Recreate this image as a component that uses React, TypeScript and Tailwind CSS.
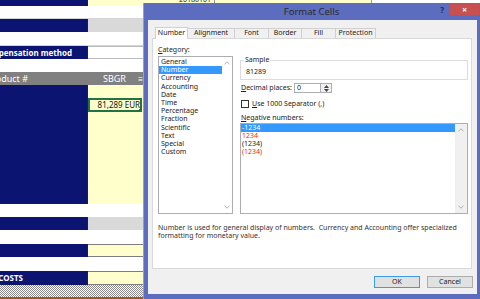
import React from 'react';

const tabs = [
  { label: 'Number', w: 'w-[33px]', active: true },
  { label: 'Alignment', w: 'w-[47px]', active: false },
  { label: 'Font', w: 'w-[34px]', active: false },
  { label: 'Border', w: 'w-[33px]', active: false },
  { label: 'Fill', w: 'w-[34px]', active: false },
  { label: 'Protection', w: 'w-[40px]', active: false },
];

const categories = [
  'General', 'Number', 'Currency', 'Accounting', 'Date', 'Time',
  'Percentage', 'Fraction', 'Scientific', 'Text', 'Special', 'Custom',
];

function Chevron({ down = false, color = '#a8a8a8' }: { down?: boolean; color?: string }) {
  return (
    <svg width="6" height="4" viewBox="0 0 6 4">
      <path d={down ? 'M0.5 0.8 L3 3.2 L5.5 0.8' : 'M0.5 3.2 L3 0.8 L5.5 3.2'} stroke={color} strokeWidth="0.9" fill="none" />
    </svg>
  );
}

function Sheet() {
  return (
    <div className="w-[144px] flex flex-col border-r border-[#a0a0a0]">
      {/* first row, top cut off */}
      <div className="h-[3px] flex">
        <div className="w-[88px] bg-[#0b1470] border-r border-[#222]" />
        <div className="flex-1 bg-[#ffffcc]" />
      </div>
      <div className="h-[13px] bg-white border-b border-[#d4d4d4]" />
      <div className="h-[13px] flex">
        <div className="w-[88px] bg-[#0b1470] border-r border-[#222]" />
        <div className="flex-1 bg-[#d9d9d9]" />
      </div>
      <div className="h-[14px] bg-white border-b border-[#d4d4d4]" />
      <div className="h-[13px] flex">
        <div className="w-[88px] bg-[#0b1470] border-r border-[#222] overflow-hidden flex justify-end items-center pr-[15px]">
          <span className="whitespace-nowrap text-white font-bold text-[8px] leading-[13px]">Compensation method</span>
        </div>
        <div className="flex-1 bg-white border-y border-[#bdbdbd]" />
      </div>
      <div className="h-[13px] bg-white" />
      {/* header */}
      <div className="h-[13px] flex bg-[#808080] text-white text-[9px] leading-[13px]">
        <div className="w-[88px] overflow-hidden flex justify-end pr-[60px]">
          <span className="whitespace-nowrap">Product #</span>
        </div>
        <div className="flex-1 flex pl-[15px] overflow-hidden">
          <span>SBGR</span>
          <span className="ml-auto text-[8px]">≡</span>
        </div>
      </div>
      <div className="h-[119px] flex">
        <div className="w-[88px] bg-[#0b1470] border-r border-[#222]" />
        <div className="flex-1 bg-[#ffffcc] pt-[13px]">
          <div className="relative w-[54px] h-[14px] border-2 border-[#217346] flex items-center justify-end text-[8px] text-[#111] whitespace-nowrap">
            81,289 EUR
            <div className="absolute -right-[2px] -bottom-[2px] w-[3px] h-[3px] bg-[#217346]" />
          </div>
        </div>
      </div>
      <div className="h-[13px] bg-white" />
      <div className="h-[13px] flex">
        <div className="w-[88px] bg-[#0b1470] border-r border-[#222]" />
        <div className="flex-1 bg-[#d9d9d9]" />
      </div>
      <div className="h-[14px] bg-white" />
      <div className="h-[13px] flex">
        <div className="w-[88px] bg-[#0b1470] border-r border-[#222]" />
        <div className="flex-1 bg-[#ffffcc] border-y border-[#7f7f7f]" />
      </div>
      <div className="h-[14px] bg-white" />
      <div className="h-[14px] flex">
        <div className="w-[88px] bg-[#0b1470] border-r border-[#222] overflow-hidden flex justify-end items-center pr-[64px]">
          <span className="whitespace-nowrap text-white font-bold text-[8px]">TOTAL COSTS</span>
        </div>
        <div className="flex-1 bg-[#ffffcc] border-y border-[#7f7f7f]" />
      </div>
      <div className="h-[12px] bg-[image:repeating-conic-gradient(#8a8a8a_0_25%,#ffffff_0_50%)] bg-[length:2px_2px]" />
      <div className="h-[2px] bg-[#9c5a1c]" />
    </div>
  );
}

function Dialog() {
  return (
    <div className="w-[336px] flex flex-col bg-[#5c6cbf] pb-[5px]">
      {/* title bar */}
      <div className="h-[17px] flex shrink-0">
        <div className="flex-1" />
        <div className="text-[9.5px] text-[#2b2b2b] leading-[17px]">Format Cells</div>
        <div className="flex-1 flex justify-end items-start pt-[1px] pr-[1px]">
          <span className="text-[8px] font-bold text-[#1e2a5a] leading-[11px] mr-[6px]">?</span>
          <div className="w-[29px] h-[11px] bg-[#c75050] text-white flex items-center justify-center text-[9px] font-bold leading-none">×</div>
        </div>
      </div>

      <div className="flex-1 ml-[4px] mr-[3px] bg-[#f0f0f0] flex flex-col pl-[4px] pt-[7px] text-[7px] text-[#222]">
        {/* tabs */}
        <div className="h-[11px] flex items-end pl-[3px]">
          {tabs.map((t) =>
            t.active ? (
              <div key={t.label} className={`${t.w} h-[12px] -mb-px relative z-10 bg-white border border-b-0 border-[#d0d0d0] flex items-center justify-center`}>
                {t.label}
              </div>
            ) : (
              <div key={t.label} className={`${t.w} h-[10px] bg-[#f0f0f0] border border-b-0 border-l-0 border-[#d0d0d0] flex items-center justify-center`}>
                {t.label}
              </div>
            )
          )}
        </div>

        {/* panel */}
        <div className="w-[320px] h-[231px] border border-[#d9d9d9] bg-white flex flex-col pl-[5px] pt-[6px]">
          <div className="flex">
            {/* category */}
            <div className="w-[75px] flex flex-col">
              <div className="h-[9px] leading-[9px]"><span className="underline">C</span>ategory:</div>
              <div className="mt-[2px] h-[158px] border border-[#abadb3] flex">
                <div className="flex-1 flex flex-col pt-px">
                  {categories.map((c) => (
                    <div key={c} className={c === 'Number' ? 'leading-[8.2px] pl-[2px] bg-[#3399ff] text-white' : 'leading-[8.2px] pl-[2px]'}>
                      {c}
                    </div>
                  ))}
                </div>
                <div className="w-[10px] flex flex-col justify-between items-center py-[4px]">
                  <Chevron />
                  <Chevron down />
                </div>
              </div>
            </div>

            {/* right side */}
            <div className="ml-[7px] w-[228px] flex flex-col">
              <fieldset className="mt-[11px] h-[24px] border border-[#dcdcdc]">
                <legend className="ml-[3px] px-[1px] leading-[8px]">Sample</legend>
                <div className="pt-[4px] pl-[5px] leading-[8px]">81289</div>
              </fieldset>

              <div className="mt-[3px] h-[10px] flex items-center">
                <div className="w-[54px] pl-px"><span className="underline">D</span>ecimal places:</div>
                <div className="w-[27px] h-[10px] border border-[#abadb3] bg-white pl-[2px] leading-[8px]">0</div>
                <div className="w-[11px] h-[10px] border border-l-0 border-[#abadb3] bg-[#f0f0f0] flex flex-col items-center justify-around">
                  <svg width="5" height="3" viewBox="0 0 5 3"><path d="M0 3 L2.5 0 L5 3 Z" fill="#444" /></svg>
                  <svg width="5" height="3" viewBox="0 0 5 3"><path d="M0 0 L2.5 3 L5 0 Z" fill="#444" /></svg>
                </div>
              </div>

              <div className="mt-[7px] h-[8px] flex items-center pl-px">
                <div className="w-[8px] h-[8px] border border-[#333] bg-white" />
                <span className="ml-[3px]"><span className="underline">U</span>se 1000 Separator (,)</span>
              </div>

              <div className="mt-[6px] h-[8px] leading-[8px] pl-px"><span className="underline">N</span>egative numbers:</div>

              <div className="mt-px h-[91px] border border-[#abadb3] bg-white flex">
                <div className="flex-1 flex flex-col">
                  <div className="leading-[8px] pl-px bg-[#3399ff] text-white">-1234</div>
                  <div className="leading-[8px] pl-px text-[#ff2020]">1234</div>
                  <div className="leading-[8px] pl-px">(1234)</div>
                  <div className="leading-[8px] pl-px text-[#ff2020]">(1234)</div>
                </div>
                <div className="w-[12px] bg-[#f0f0f0] flex flex-col justify-between items-center py-[4px]">
                  <Chevron />
                  <Chevron down />
                </div>
              </div>
            </div>
          </div>

          <div className="mt-[10px] leading-[8px] text-[#333] whitespace-nowrap">
            Number is used for general display of numbers.&nbsp; Currency and Accounting offer specialized
            <br />
            formatting for monetary value.
          </div>
        </div>

        {/* buttons */}
        <div className="mt-[7px] flex justify-end gap-[7px] pr-[4px]">
          <div className="w-[46px] h-[12px] border border-[#3c9be8] bg-[#e1e1e1] flex items-center justify-center">OK</div>
          <div className="w-[46px] h-[12px] border border-[#adadad] bg-[#e1e1e1] flex items-center justify-center">Cancel</div>
        </div>
      </div>
    </div>
  );
}

export default function App() {
  return (
    <div className="w-[480px] h-[299px] overflow-hidden flex flex-col bg-white font-['Noto_Sans',sans-serif]">
      {/* strip of sheet above the dialog */}
      <div className="h-[3px] flex shrink-0 overflow-hidden">
        <div className="w-[88px] bg-[#0b1470] border-r border-[#222]" />
        <div className="w-[127px] bg-[#ffffcc] border-r border-[#9a9a9a] flex justify-end pr-[3px] overflow-hidden">
          <span className="-mt-[4px] text-[7px] leading-[8px] text-[#222]">20180101</span>
        </div>
        <div className="w-[157px] bg-[#ffffcc] border-r border-[#9a9a9a]" />
        <div className="flex-1 bg-white" />
      </div>
      <div className="flex flex-1">
        <Sheet />
        <Dialog />
      </div>
    </div>
  );
}
